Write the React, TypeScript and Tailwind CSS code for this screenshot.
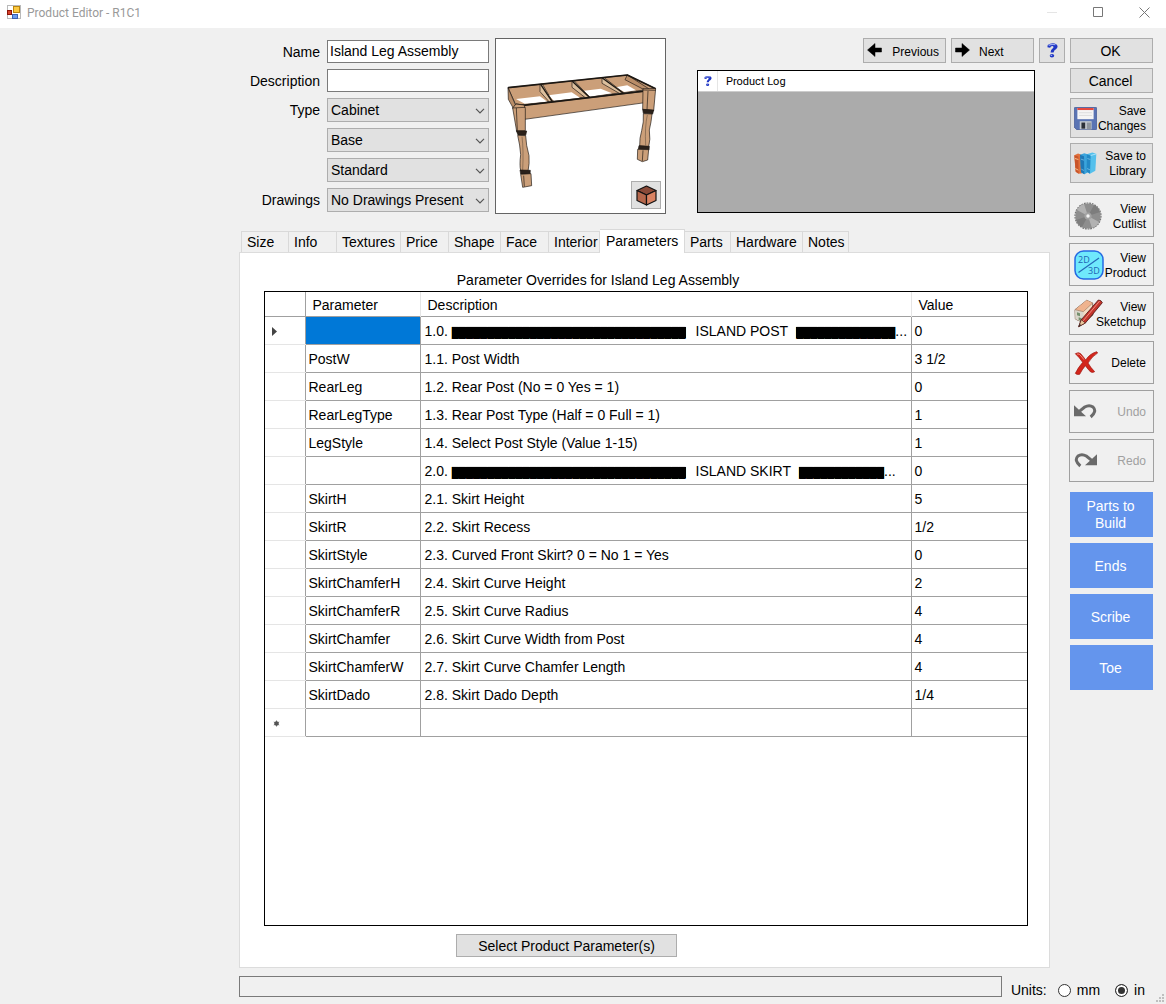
import { useState } from "react";
import type { ReactNode } from "react";

interface ParameterRow {
  name: string;
  description: ReactNode;
  value: string;
}

const Blocks = ({ count }: { count: number }) => (
  <span className="bg-black text-[10px] leading-3">{"█".repeat(count)}</span>
);

const ROWS: ParameterRow[] = [
  {
    name: "",
    description: <>1.0. <Blocks count={33} /><span className="ml-2.5 mr-2">ISLAND POST</span><Blocks count={14} />...</>,
    value: "0",
  },
  { name: "PostW", description: "1.1. Post Width", value: "3 1/2" },
  { name: "RearLeg", description: "1.2. Rear Post (No = 0 Yes = 1)", value: "0" },
  { name: "RearLegType", description: "1.3. Rear Post Type (Half = 0 Full = 1)", value: "1" },
  { name: "LegStyle", description: "1.4. Select Post Style (Value 1-15)", value: "1" },
  {
    name: "",
    description: <>2.0. <Blocks count={33} /><span className="ml-2.5 mr-2">ISLAND SKIRT</span><Blocks count={12} />...</>,
    value: "0",
  },
  { name: "SkirtH", description: "2.1. Skirt Height", value: "5" },
  { name: "SkirtR", description: "2.2. Skirt Recess", value: "1/2" },
  { name: "SkirtStyle", description: "2.3. Curved Front Skirt? 0 = No 1 = Yes", value: "0" },
  { name: "SkirtChamferH", description: "2.4. Skirt Curve Height", value: "2" },
  { name: "SkirtChamferR", description: "2.5. Skirt Curve Radius", value: "4" },
  { name: "SkirtChamfer", description: "2.6. Skirt Curve Width from Post", value: "4" },
  { name: "SkirtChamferW", description: "2.7. Skirt Curve Chamfer Length", value: "4" },
  { name: "SkirtDado", description: "2.8. Skirt Dado Depth", value: "1/4" },
];

const TABS = [
  { label: "Size", width: "w-12" },
  { label: "Info", width: "w-12" },
  { label: "Textures", width: "w-16" },
  { label: "Price", width: "w-12" },
  { label: "Shape", width: "w-[52px]" },
  { label: "Face", width: "w-12" },
  { label: "Interior", width: "w-[51px]" },
  { label: "Parameters", width: "w-[85px]" },
  { label: "Parts", width: "w-[46px]" },
  { label: "Hardware", width: "w-[72px]" },
  { label: "Notes", width: "w-[46px]" },
];

/* ---------- icons ---------- */

const AppIcon = () => (
  <svg width="14" height="14" viewBox="0 0 14 14">
    <rect x="0.5" y="0.5" width="13" height="13" fill="#fff" stroke="#b9b9b9" />
    <rect x="6.5" y="1.5" width="6" height="6" fill="#fcc940" stroke="#b98510" />
    <rect x="0.5" y="5.5" width="4" height="4" fill="#d8402a" stroke="#8c1508" />
    <rect x="5.5" y="9.5" width="5" height="4" fill="#6c9cf0" stroke="#3a62b5" />
  </svg>
);

const HelpIcon = ({ size }: { size: number }) => (
  <svg width={size} height={size} viewBox="0 0 16 16">
    <path d="M3.5 2.8Q7.5.2 11.5 2Q14 4 11.5 6.7Q9.2 8 9 9.8H6.2Q6.2 7.4 8.3 5.9Q9.8 4.4 8 3.7Q6.2 3.6 5.8 5.4L3.2 5Z" fill="#1f36c4" />
    <path d="M4.4 3.2Q7.5 1.5 10.8 2.6" stroke="#9aa9f0" strokeWidth="1.1" fill="none" />
    <ellipse cx="7.5" cy="13" rx="2.1" ry="1.7" fill="#1f36c4" />
    <ellipse cx="7" cy="12.6" rx="0.8" ry="0.5" fill="#9aa9f0" />
  </svg>
);

const ArrowIcon = ({ right = false }: { right?: boolean }) => (
  <svg width="15" height="14" viewBox="0 0 15 14" className="mb-0.5">
    <path
      d={right ? "M0.500 5H7V0.500L14.500 7L7 13.500V9H0.500Z" : "M14.500 5H8V0.500L0.500 7L8 13.500V9H14.500Z"}
      fill="#000"
      stroke="#000"
      strokeWidth="0.5"
      strokeLinejoin="round"
    />
  </svg>
);

const CubeIcon = () => (
  <svg width="21" height="21" viewBox="0 0 21 21" stroke="#111" strokeWidth="1.2" strokeLinejoin="round">
    <path d="M10.5 1L20 5.5L10.5 10L1 5.5Z" fill="#8a4a38" />
    <path d="M1 5.5L10.5 10V20L1 15.5Z" fill="#b5674c" />
    <path d="M20 5.5L10.5 10V20L20 15.5Z" fill="#d98262" />
  </svg>
);

const FloppyIcon = () => (
  <svg width="23" height="23" viewBox="0 0 68 68">
    <path d="M4 1H64Q67 1 67 4V64Q67 67 64 67H8L1 60V4Q1 1 4 1Z" fill="#5a74b4" stroke="#3d5290" strokeWidth="2" />
    <rect x="10" y="3" width="48" height="33" fill="#f5f5f5" />
    <rect x="10" y="3" width="48" height="6" fill="#e5493f" />
    <path d="M15 17H53M15 25H53" stroke="#d3d3d3" strokeWidth="2" />
    <rect x="17" y="42" width="35" height="24" fill="#c5c9cf" />
    <rect x="22" y="46" width="11" height="18" fill="#2c3038" />
    <rect x="38" y="46" width="12" height="20" fill="#8f959e" />
  </svg>
);

const BooksIcon = () => (
  <svg width="24" height="23" viewBox="0 0 72 66">
    <path d="M1 8L12 3L23 7L25 62L14 64L5 58Z" fill="#e0703c" />
    <path d="M1 8L13 12L14 64L5 58Z" fill="#c9552a" />
    <path d="M3 18L13 21M4 48L13 53" stroke="#f7c08a" strokeWidth="3" />
    <path d="M18 7L31 2L43 6L41 60L31 65L21 59Z" fill="#3ba4dc" />
    <path d="M18 7L30 11L31 65L21 59Z" fill="#1f78b6" />
    <path d="M38 5L55 0L67 4L64 55L48 64L37 57Z" fill="#55c0ec" />
    <path d="M38 5L50 9L48 64L37 57Z" fill="#2389c6" />
    <path d="M21 20L30 23M40 18L49 21M39 48L48 52M22 50L30 54" stroke="#a7e1fa" strokeWidth="1.5" />
    <path d="M50 9L67 4" stroke="#d8f3ff" strokeWidth="2" />
  </svg>
);

const SawIcon = () => (
  <svg width="28" height="28" viewBox="0 0 28 28">
    <circle cx="14" cy="14" r="12.600" fill="#8e8e8e" />
    <circle cx="14" cy="14" r="13" fill="none" stroke="#777" strokeWidth="1.200" strokeDasharray="1.8 0.9" />
    <path d="M14 14L3 8A12.500 12.500 0 0 1 10 2ZM14 14L25 20A12.500 12.500 0 0 1 18 26Z" fill="#b2b2b2" />
    <path d="M14 14L20 3A12.500 12.500 0 0 1 26 10ZM14 14L8 25A12.500 12.500 0 0 1 2 18Z" fill="#7d7d7d" />
    <circle cx="14" cy="14" r="3.600" fill="#a3a3a3" />
    <circle cx="14" cy="14" r="1.700" fill="#f4f4f4" />
  </svg>
);

const View3dIcon = () => (
  <svg width="30" height="30" viewBox="0 0 30 30">
    <rect x="1" y="1" width="28" height="28" rx="8.500" fill="#6fe9fc" stroke="#2569e2" strokeWidth="1.500" />
    <path d="M4.500 22.500L25 8" stroke="#2468b8" strokeWidth="1.200" />
    <text x="4" y="12.500" fontSize="9" fill="#2064b4" fontFamily="Open Sans, sans-serif">2D</text>
    <text x="14" y="24" fontSize="9" fill="#2064b4" fontFamily="Open Sans, sans-serif">3D</text>
  </svg>
);

const SketchupIcon = () => (
  <svg width="29" height="29" viewBox="0 0 87 87">
    <path d="M3 32L38 4L56 12L57 48L29 72L4 60Z" fill="#f3dcc4" stroke="#8a6b58" strokeWidth="3" />
    <path d="M3 32L38 4L56 12L28 38Z" fill="#efb38e" />
    <path d="M3 32L28 38L29 72L4 60Z" fill="#d9d6cb" />
    <path d="M3 32L28 38L56 12" fill="none" stroke="#9c7a64" strokeWidth="2" />
    <path d="M9 40L18 43V52L9 49ZM14 55L23 58V67L14 63Z" fill="#74906f" />
    <path d="M73 3Q82 3 85 11L34 72L14 83L22 62Z" fill="#c4352c" stroke="#4e1512" strokeWidth="2.5" />
    <path d="M77 6L27 66" stroke="#ef8d80" strokeWidth="3" />
    <path d="M22 62L34 72L14 83Z" fill="#e8c79c" stroke="#4e1512" strokeWidth="2" />
    <path d="M18 75L21 79L14 83Z" fill="#222" />
  </svg>
);

const DeleteIcon = () => (
  <svg width="24" height="24" viewBox="0 0 72 72">
    <path d="M4 8Q14 2 20 8Q28 17 35 27Q47 8 68 2L71 6Q54 16 42 36Q50 50 62 62Q56 66 50 63Q42 55 34 44Q24 56 17 70Q8 72 4 67Q12 50 26 34Q16 19 4 8Z" fill="#d3261c" stroke="#9d140e" strokeWidth="2" />
    <path d="M9 9Q16 7 21 15L30 26" stroke="#f08b80" strokeWidth="3" fill="none" />
  </svg>
);

const UndoIcon = ({ flip = false }: { flip?: boolean }) => (
  <svg width="23" height="15" viewBox="0 0 69 45" className={flip ? "-scale-x-100" : ""}>
    <path d="M0 4V37H36Z" fill="#6a6a6a" />
    <path d="M16 22L32 9Q46 1 57 9Q70 22 50 39" fill="none" stroke="#6a6a6a" strokeWidth="9" />
  </svg>
);

const ChevronIcon = () => (
  <svg width="10" height="6" viewBox="0 0 10 6" className="pointer-events-none absolute right-1 top-[10px]">
    <path d="M1 0.800L5 4.800L9 0.800" stroke="#555" strokeWidth="1.200" fill="none" />
  </svg>
);

// island frame with cross members and two turned legs
const IslandDrawing = () => (
  <svg viewBox="18 27 507 522" className="h-full w-full" stroke="#1c1712" strokeWidth="2" strokeLinejoin="round">
    <path d="M54 173L412 135L497 176L78 226Z" fill="#cb9f79" />
    <g fill="#fff" stroke="none">
      <path d="M78 207L150 199L172 215L104 221Z" />
      <path d="M175 196L245 187L270 203L192 212Z" />
      <path d="M270 184L332 176L366 190L298 200Z" />
      <path d="M377 172L412 166L438 181L403 186Z" />
    </g>
    <g fill="#dcbf9d">
      <path d="M150 163L157 162L188 215L178 216L150 185Z" />
      <path d="M246 154L253 153L300 202L287 204L246 172Z" />
      <path d="M336 144L343 143L400 188L388 190L336 160Z" />
    </g>
    <g fill="none" strokeWidth="4">
      <path d="M152 163L186 214" />
      <path d="M247 154L298 202" />
      <path d="M337 144L398 188" />
    </g>
    <path d="M412 135L476 176L470 183L405 149Z" fill="#b98d68" />
    <path d="M54 173L412 135L497 176" fill="none" strokeWidth="5" />
    <path d="M54 173L76 224L70 235L55 208Z" fill="#b98d68" />
    <path d="M100 226L472 183V217L104 268Z" fill="#cb9f79" />
    <path d="M78 223L100 226L474 182" fill="none" strokeWidth="5" />
    <path d="M68 234L78 222L102 225L106 236V302L80 304Z" fill="#cb9f79" />
    <path d="M66 234L106 232M79 234L82 302" fill="none" />
    <path d="M79 302L110 303L107 316L84 315Z" fill="#2b211a" />
    <path d="M83 316L107 317Q108 345 117 377Q119 400 114 424L92 422Q88 405 92 374Q90 345 83 316Z" fill="#cb9f79" />
    <path d="M96 320Q101 360 98 420" fill="none" strokeWidth="1" />
    <path d="M90 420L121 421L120 434L92 432Z" fill="#2b211a" />
    <path d="M92 433L123 431L125 467L98 472Z" fill="#cb9f79" />
    <path d="M101 437L103 470" />
    <path d="M459 176L497 176L491 242L458 238Z" fill="#cb9f79" />
    <path d="M474 183L471 239M459 180L497 181" fill="none" />
    <path d="M458 238L491 240L488 252L460 250Z" fill="#2b211a" />
    <path d="M460 251L486 252Q484 275 478 300Q482 330 476 350L449 348Q448 325 455 302Q462 275 460 251Z" fill="#cb9f79" />
    <path d="M472 255Q464 290 467 346" fill="none" strokeWidth="1" />
    <path d="M447 347L478 349L477 360L445 358Z" fill="#2b211a" />
    <path d="M443 358L476 359L473 390L457 395L442 388Z" fill="#cb9f79" />
    <path d="M459 361L457 393" />
  </svg>
);

/* ---------- controls ---------- */

const Dropdown = ({ id, label, value }: { id: string; label: string; value: string }) => (
  <>
    <label htmlFor={id} className="pr-[7px] text-right">{label}</label>
    <div className="relative">
      <select
        id={id}
        aria-label={label || value}
        className="block h-6 w-full appearance-none border border-[#adadad] bg-[#e1e1e1] pl-[3px] pr-4"
      >
        <option>{value}</option>
      </select>
      <ChevronIcon />
    </div>
  </>
);

const TextField = ({ id, label, value }: { id: string; label: string; value: string }) => (
  <>
    <label htmlFor={id} className="pr-[7px] text-right">{label}</label>
    <input id={id} defaultValue={value} className="h-[23px] w-full border border-[#7a7a7a] bg-white px-0.5 pb-0.5" />
  </>
);

interface SideButtonProps {
  icon: ReactNode;
  children: ReactNode;
  variant?: "raised" | "flat";
  disabled?: boolean;
}

const SideButton = ({ icon, children, variant = "flat", disabled = false }: SideButtonProps) => (
  <button
    disabled={disabled}
    className={`grid w-full items-center border text-xs leading-[15px] *:[grid-area:1/1] ${
      variant === "raised"
        ? "h-10 border-[#adadad] bg-[#e1e1e1] pl-[3px] pr-1.5"
        : "h-[43px] border-[#a0a0a0] bg-[#f0f0f0] pl-1 pr-[7px]"
    } ${disabled ? "text-[#a0a0a0]" : "text-black"}`}
  >
    <span className="justify-self-start">{icon}</span>
    <span className="justify-self-end whitespace-pre-line pt-0.5 text-right">{children}</span>
  </button>
);

const App = () => {
  const [activeTab, setActiveTab] = useState("Parameters");
  const [units, setUnits] = useState("in");

  return (
    <div className="flex min-h-screen flex-col bg-[#f0f0f0] font-['Liberation_Sans',Arial,sans-serif] text-sm leading-4 text-black">
      <header className="flex h-7 items-center bg-white pb-1 pl-[7px] pr-4">
        <AppIcon />
        <h1 className="ml-1.5 flex-1 pt-0.5 font-[Roboto,sans-serif] text-xs text-[#999]">Product Editor - R1C1</h1>
        <div className="flex items-center gap-9 text-[#777]">
          <button aria-label="Minimize" className="text-[#e5e5e5]">
            <svg width="10" height="10" viewBox="0 0 10 10"><path d="M0 5.500H10" stroke="currentColor" /></svg>
          </button>
          <button aria-label="Maximize">
            <svg width="10" height="10" viewBox="0 0 10 10"><path d="M0.500 0.500H9.500V9.500H0.500Z" stroke="currentColor" fill="none" /></svg>
          </button>
          <button aria-label="Close">
            <svg width="11" height="11" viewBox="0 0 11 11"><path d="M0.500 0.500L10.500 10.500M10.500 0.500L0.500 10.500" stroke="currentColor" /></svg>
          </button>
        </div>
      </header>

      <div className="flex flex-1 gap-1 pl-[239px] pr-3 pt-2.5">
        <main className="flex min-w-0 flex-1 flex-col">
          <div className="flex items-start">
            <form className="mt-0.5 grid w-[250px] grid-cols-[88px_162px] items-center gap-y-1.5">
              <TextField id="name" label="Name" value="Island Leg Assembly" />
              <TextField id="description" label="Description" value="" />
              <Dropdown id="type" label="Type" value="Cabinet" />
              <Dropdown id="class" label="" value="Base" />
              <Dropdown id="subclass" label="" value="Standard" />
              <Dropdown id="drawings" label="Drawings" value="No Drawings Present" />
            </form>

            <div className="relative ml-1.5 h-44 w-[171px] shrink-0 border border-[#646464] bg-white">
              <IslandDrawing />
              <button aria-label="3D view" className="absolute bottom-1 right-1 flex h-7 w-[30px] items-center justify-center border border-[#adadad] bg-[#e1e1e1]">
                <CubeIcon />
              </button>
            </div>

            <div className="ml-[31px] min-w-0 flex-1">
              <div className="flex justify-end gap-[5px] text-xs">
                <button className="flex h-[25px] w-[83px] items-center justify-between border border-[#adadad] bg-[#e1e1e1] pl-[3px] pr-1.5">
                  <ArrowIcon />
                  <span className="pt-0.5">Previous</span>
                </button>
                <button className="flex h-[25px] w-[83px] items-center gap-[9px] border border-[#adadad] bg-[#e1e1e1] pl-[3px]">
                  <ArrowIcon right />
                  <span className="pt-0.5">Next</span>
                </button>
                <button aria-label="Help" className="flex h-[25px] w-[26px] items-center justify-center border border-[#adadad] bg-[#e1e1e1]">
                  <HelpIcon size={17} />
                </button>
              </div>
              <div className="mr-[30px] mt-[7px] flex h-[143px] flex-col border border-black bg-[#ababab]">
                <div className="flex h-[21px] items-center border-b border-[#ccc] bg-white font-[Roboto,sans-serif] text-[11px]">
                  <span className="flex h-full w-5 items-center justify-center border-r border-[#e5e5e5]">
                    <HelpIcon size={12} />
                  </span>
                  <span className="ml-2 pt-0.5">Product Log</span>
                </div>
              </div>
            </div>
          </div>

          <div className="mr-[15px] mt-[15px] flex flex-1 flex-col">
            <div role="tablist" className="flex items-end pl-0.5">
              {TABS.map((tab) => (
                <button
                  key={tab.label}
                  role="tab"
                  aria-selected={tab.label === activeTab}
                  onClick={() => setActiveTab(tab.label)}
                  className={`${tab.width} whitespace-nowrap border-t border-[#d9d9d9] text-left ${
                    tab.label === activeTab
                      ? "relative -mb-px h-6 border-r bg-white pb-0.5 pl-1.5"
                      : "h-[21px] border-r pl-[5px] first:border-l"
                  }`}
                >
                  {tab.label}
                </button>
              ))}
            </div>

            <section className="flex flex-1 flex-col border border-[#dcdcdc] bg-white pb-2.5 pl-6 pr-[21px] pt-[19px]">
              <h2 className="mr-24 text-center">Parameter Overrides for Island Leg Assembly</h2>
              <div className="mt-[3px] flex-1 border border-black">
                <table className="w-full table-fixed border-collapse text-left">
                  <colgroup>
                    <col className="w-10" />
                    <col className="w-[115px]" />
                    <col />
                    <col className="w-[116px]" />
                  </colgroup>
                  <thead>
                    <tr className="h-6 border-b border-[#a0a0a0] *:pt-0.5">
                      <th className="border-r border-[#a0a0a0]" />
                      <th className="border-r border-[#e5e5e5] pl-[7px] font-normal">Parameter</th>
                      <th className="border-r border-[#e5e5e5] pl-[7px] font-normal">Description</th>
                      <th className="pl-[7px] font-normal">Value</th>
                    </tr>
                  </thead>
                  <tbody>
                    {ROWS.map((row, i) => (
                      <tr key={i} className="h-7 *:pt-0.5">
                        <td className="border-b border-[#e5e5e5] pl-[7px]">
                          {i === 0 && (
                            <svg width="5" height="9" viewBox="0 0 5 9"><path d="M0 0L5 4.500L0 9Z" fill="#444" /></svg>
                          )}
                        </td>
                        <td className={`border border-[#a0a0a0] pl-[3px] ${i === 0 ? "bg-[#0078d7]" : ""}`}>{row.name}</td>
                        <td className="overflow-hidden whitespace-nowrap border border-[#a0a0a0] pl-1">{row.description}</td>
                        <td className="border-y border-[#a0a0a0] pl-[3px]">{row.value}</td>
                      </tr>
                    ))}
                    <tr className="h-7 *:pt-0.5">
                      <td className="border-b border-[#e5e5e5] pl-2">
                        <svg width="7" height="7" viewBox="0 0 7 7">
                          <circle cx="3.500" cy="3.500" r="2.200" fill="#555" />
                          <path d="M3.500 0.500V6.500M0.800 2L6.200 5M6.200 2L0.800 5" stroke="#555" strokeWidth="0.800" />
                        </svg>
                      </td>
                      <td className="border border-[#a0a0a0]" />
                      <td className="border border-[#a0a0a0]" />
                      <td className="border-y border-[#a0a0a0]" />
                    </tr>
                  </tbody>
                </table>
              </div>
              <button className="ml-48 mt-2 h-[23px] w-[221px] border border-[#adadad] bg-[#e1e1e1]">
                Select Product Parameter(s)
              </button>
            </section>
          </div>
        </main>

        <aside className="flex w-[85px] shrink-0 flex-col">
          <div className="flex flex-col gap-[5px] px-px">
            <button className="h-[25px] border border-[#adadad] bg-[#e1e1e1] pr-0.5">OK</button>
            <button className="h-[25px] border border-[#adadad] bg-[#e1e1e1] pr-0.5">Cancel</button>
            <SideButton variant="raised" icon={<FloppyIcon />}>{"Save\nChanges"}</SideButton>
            <SideButton variant="raised" icon={<BooksIcon />}>{"Save to\nLibrary"}</SideButton>
          </div>
          <div className="mt-[11px] flex flex-col gap-1.5">
            <SideButton icon={<SawIcon />}>{"View\nCutlist"}</SideButton>
            <SideButton icon={<View3dIcon />}>{"View\nProduct"}</SideButton>
            <SideButton icon={<SketchupIcon />}>{"View\nSketchup"}</SideButton>
            <SideButton icon={<DeleteIcon />}>Delete</SideButton>
            <SideButton icon={<UndoIcon />} disabled>Undo</SideButton>
            <SideButton icon={<UndoIcon flip />} disabled>Redo</SideButton>
          </div>
          <div className="mt-2.5 flex flex-col gap-1.5 px-px">
            {["Parts to\nBuild", "Ends", "Scribe", "Toe"].map((label) => (
              <button key={label} className="h-[45px] whitespace-pre-line bg-[#6495ed] pr-0.5 pt-px leading-[17px] text-white">
                {label}
              </button>
            ))}
          </div>
        </aside>
      </div>

      <footer className="relative flex h-9 items-start pl-[239px] pr-[21px] pt-2">
        <div className="h-[21px] flex-1 border border-[#7a7a7a]" />
        <fieldset className="ml-[9px] mt-1.5 flex items-center">
          <span className="mr-[11px]">Units:</span>
          {["mm", "in"].map((unit) => (
            <label key={unit} className="mr-[15px] flex items-center gap-1.5 last:mr-0">
              <input
                type="radio"
                name="units"
                checked={units === unit}
                onChange={() => setUnits(unit)}
                className="size-[13px] appearance-none rounded-full border border-[#333] bg-white checked:bg-[#333] checked:shadow-[inset_0_0_0_2px_white]"
              />
              {unit}
            </label>
          ))}
        </fieldset>
        <svg width="9" height="9" viewBox="0 0 9 9" className="absolute bottom-px right-px">
          <path d="M6 0H8V2H6ZM3 3H5V5H3ZM6 3H8V5H6ZM0 6H2V8H0ZM3 6H5V8H3ZM6 6H8V8H6Z" fill="#bfbfbf" />
        </svg>
      </footer>
    </div>
  );
};

export default App;
